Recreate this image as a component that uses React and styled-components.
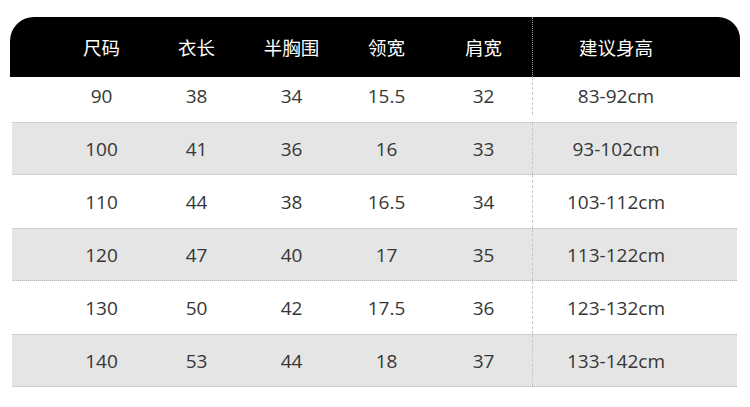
import styled, { createGlobalStyle } from "styled-components";

const GlobalStyle = createGlobalStyle`
  body {
    margin: 0;
    background: #ffffff;
    font-family: "Open Sans", "Noto Sans CJK SC", sans-serif;
  }
`;

const headers = ["尺码", "衣长", "半胸围", "领宽", "肩宽", "建议身高"];

const rows = [
  ["90", "38", "34", "15.5", "32", "83-92cm"],
  ["100", "41", "36", "16", "33", "93-102cm"],
  ["110", "44", "38", "16.5", "34", "103-112cm"],
  ["120", "47", "40", "17", "35", "113-122cm"],
  ["130", "50", "42", "17.5", "36", "123-132cm"],
  ["140", "53", "44", "18", "37", "133-142cm"],
];

function App() {
  return (
    <>
      <GlobalStyle />
      <Page>
        <Table>
          <HeadRow>
            {headers.map((h, i) => (
              <HeadCell key={h} $split={i === 5}>
                {h}
              </HeadCell>
            ))}
          </HeadRow>
          {rows.map((r, idx) => (
            <BodyRow key={r[0]} $shaded={idx % 2 === 1} $first={idx === 0}>
              {r.map((v, i) => (
                <Cell key={i} $split={i === 5}>
                  {v}
                </Cell>
              ))}
            </BodyRow>
          ))}
        </Table>
      </Page>
    </>
  );
}

export default App;

const Page = styled.div`
  width: 750px;
  height: 407px;
  padding: 17px 10px 0 10px;
  box-sizing: border-box;
  overflow: hidden;
`;

const Table = styled.div`
  width: 730px;
  display: flex;
  flex-direction: column;
`;

const cols = `95px 95px 95px 95px 99px 166px 1fr`;

const HeadRow = styled.div`
  display: grid;
  grid-template-columns: ${cols};
  padding-left: 44px;
  height: 60px;
  background: #000;
  border-radius: 24px 22px 0 0;
  color: #fff;
  font-family: "Noto Sans CJK SC", sans-serif;
  font-size: 18.5px;
`;

const HeadCell = styled.div`
  display: flex;
  align-items: center;
  justify-content: center;
  padding-bottom: 1px;
  border-left: ${(p) => (p.$split ? "1px dotted #9a9a9a" : "none")};
  margin-left: ${(p) => (p.$split ? "-1px" : "0")};
`;

const BodyRow = styled.div`
  display: grid;
  grid-template-columns: ${cols};
  padding-left: 42px;
  padding-bottom: ${(p) => (p.$first ? "7px" : "0")};
  margin: 0 3px 0 2px;
  height: ${(p) => (p.$first ? "45px" : "53px")};
  box-sizing: border-box;
  background: ${(p) => (p.$shaded ? "#e5e5e5" : "transparent")};
  border-top: ${(p) => (p.$shaded ? "1px dotted #b8b8b8" : "none")};
  border-bottom: ${(p) => (p.$shaded ? "1px dotted #b8b8b8" : "none")};
  color: #363636;
  font-size: 19px;
`;

const Cell = styled.div`
  display: flex;
  align-items: center;
  justify-content: center;
  border-left: ${(p) => (p.$split ? "1px dashed #c8c8c8" : "none")};
  margin-left: ${(p) => (p.$split ? "-1px" : "0")};
`;
